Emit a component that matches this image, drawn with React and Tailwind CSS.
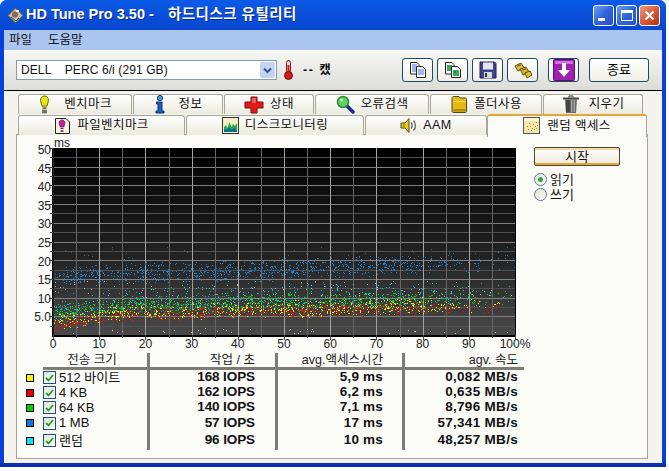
import React from 'react'

const font = "[font-family:'Liberation_Sans','Noto_Sans_CJK_KR',sans-serif]"

function rng(seed){
  let a = seed
  return () => {
    a |= 0; a = a + 0x6D2B79F5 | 0
    let t = Math.imul(a ^ a >>> 15, 1 | a)
    t = t + Math.imul(t ^ t >>> 7, 61 | t) ^ t
    return ((t ^ t >>> 14) >>> 0) / 4294967296
  }
}

// plot is 462 x 187, 0-100% and 0-50ms
const PW = 462
const PH = 187
const PMS = PH / 50

const series = [
  { color: '#1f7fd0', n: 1500, spread: 2.0, fade: 0.75, mid: x => 15.8 + 0.04 * x },
  { color: '#17c9c9', n: 700, spread: 2.6, fade: 0.95, mid: x => 7 + (x < 15 ? x * 0.12 : 1.8 + x * 0.02) },
  { color: '#1fc21f', n: 1100, spread: 1.9, fade: 0.95, mid: x => 5.6 + (x < 15 ? x * 0.13 : 1.95 + x * 0.025) },
  { color: '#efef1e', n: 1100, spread: 1.7, fade: 0.85, mid: x => 3.4 + (x < 12 ? x * 0.2 : 2.4 + x * 0.025) },
  { color: '#e01212', n: 1000, spread: 1.35, fade: 0.85, mid: x => 2.4 + (x < 12 ? x * 0.22 : 2.64 + x * 0.028) },
]

function makeDots(){
  const r = rng(4242)
  const dots = []
  series.forEach(s => {
    for (let i = 0; i < s.n; i++) {
      const x = r() * 100
      const keep = x < 72 ? 1 : Math.max(0.05, 1 - (x - 72) / 27)
      if (r() > keep * s.fade) continue
      const ms = s.mid(x) + (r() + r() - 1) * s.spread * 1.5
      dots.push({ x: Math.round(x / 100 * PW), y: Math.round(PH - ms * PMS), c: s.color, o: r() })
    }
  })
  dots.sort((a, b) => a.o - b.o)
  for (let i = 0; i < 150; i++) {
    const x = r() * 100
    dots.push({ x: Math.round(x / 100 * PW), y: Math.round(PH - (10.5 + r() * 4) * PMS), c: r() > 0.5 ? '#9fc9c0' : '#2aa0a0' })
  }
  for (let i = 0; i < 40; i++) {
    dots.push({ x: Math.round(r() * PW), y: Math.round(PH - (0.4 + r() * 1.4) * PMS), c: r() > 0.5 ? '#e8e870' : '#bbbbbb' })
  }
  for (let i = 0; i < 45; i++) {
    dots.push({ x: Math.round(r() * PW), y: Math.round(PH - (20 + r() * 4) * PMS), c: '#45617a' })
  }
  return dots
}

const dots = makeDots()

function Chart(){
  const left = 36
  const top = 13
  const yLabels = ['50','45','40','35','30','25','20','15','10','5.0']
  const xs = Array.from({ length: 21 }, (_, i) => i * PW / 20)
  const ys = Array.from({ length: 20 }, (_, i) => i * PH / 20)
  return (
    <svg width="514" height="218" className="block shrink-0" style={{ fontFamily: "'Liberation Sans', sans-serif" }}>
      <defs>
        <linearGradient id="plotbg" x1="0" y1="0" x2="0" y2="1">
          <stop offset="0" stopColor="#000" />
          <stop offset="0.6" stopColor="#242424" />
          <stop offset="1" stopColor="#4a4a4a" />
        </linearGradient>
      </defs>
      <text x={left + 1} y={top - 1} fontSize="12" fill="#222">ms</text>
      <g transform={`translate(${left} ${top})`} shapeRendering="crispEdges">
        <rect width={PW} height={PH} fill="url(#plotbg)" />
        {ys.map((y, i) => i > 0 && (
          <line key={i} x1="0" x2={PW} y1={Math.round(y) + 0.5} y2={Math.round(y) + 0.5} stroke={i % 2 ? '#4f4f4f' : '#7f7f7f'} />
        ))}
        {xs.map((x, i) => (
          <line key={i} y1="0" y2={PH} x1={Math.round(x) + 0.5} x2={Math.round(x) + 0.5} stroke={i % 2 ? '#666666' : '#a2a2a2'} />
        ))}
        {dots.map((d, i) => <rect key={i} x={d.x} y={d.y} width="1" height="1" fill={d.c} />)}
        <line x1="-0.5" x2="-0.5" y1="0" y2={PH + 1} stroke="#000" strokeWidth="1" />
        <line x1="0" x2="0" y1="0" y2={PH} stroke="#222" />
        <line x1="-1" x2={PW + 1} y1={PH + 0.5} y2={PH + 0.5} stroke="#000" strokeWidth="2" />
        <line x1={PW + 0.5} x2={PW + 0.5} y1="0" y2={PH} stroke="#000" strokeWidth="1" />
        {ys.map((y, i) => <line key={i} x1={i % 2 ? -3 : -4} x2="0" y1={Math.round(y) + 0.5} y2={Math.round(y) + 0.5} stroke="#444" />)}
        {xs.map((x, i) => <line key={i} y1={PH} y2={PH + (i % 2 ? 3 : 5)} x1={Math.round(x) + 0.5} x2={Math.round(x) + 0.5} stroke="#444" />)}
      </g>
      {yLabels.map((l, i) => (
        <text key={l} x={left - 2} y={top + 6 + i * 18.6} fontSize="12" fill="#222" textAnchor="end">{l}</text>
      ))}
      {Array.from({ length: 11 }, (_, i) => (
        <text key={i} x={left + i * PW / 10} y={top + PH + 13} fontSize="12" fill="#222" textAnchor="middle">{i === 10 ? '100%' : i * 10}</text>
      ))}
    </svg>
  )
}

function Bulb(){
  return <svg width="13" height="19" viewBox="0 0 13 19"><path d="M6.5 1C9 1 10.5 3 10.5 5.5L9 11H4L2.500 5.500C2.500 3 4 1 6.500 1Z" fill="#e6e619" stroke="#6b6b10" /><rect x="4.500" y="12" width="4" height="2" fill="#8a8a10" /><rect x="4.500" y="15" width="4" height="3" fill="#777" stroke="#444" strokeWidth=".5" /></svg>
}
function Info(){
  return <svg width="12" height="19" viewBox="0 0 12 19"><circle cx="6" cy="3" r="2.600" fill="#3aa0e0" stroke="#123a80" /><path d="M2.500 7H8V16H10V18H2V16H4V9H2.500Z" fill="#1d62c0" stroke="#0b2f70" /></svg>
}
function Cross(){
  return <svg width="20" height="18" viewBox="0 0 20 18"><path d="M7 1H13V6H19V12H13V17H7V12H1V6H7Z" fill="#e01818" stroke="#7a1010" /><path d="M8 2H12V7H8Z" fill="#f06060" /></svg>
}
function Glass(){
  return <svg width="19" height="19" viewBox="0 0 19 19"><path d="M10 10L17 17" stroke="#1a2a90" strokeWidth="3.500" strokeLinecap="round" /><circle cx="7" cy="7" r="5.500" fill="#5ed65e" stroke="#2a8a3a" strokeWidth="1.500" /><circle cx="5.500" cy="5" r="1.500" fill="#c8f4c8" /></svg>
}
function Folder(){
  return <svg width="18" height="19" viewBox="0 0 18 19"><path d="M2 4V3.500C2 2 3 1.500 4 1.500H9L10 3H15.500C16.500 3 16.500 4 16.500 5V16C16.500 17 16 17.500 15 17.500H3.500C2.500 17.500 2 17 2 16Z" fill="#e8b814" stroke="#4a4a20" /><path d="M3.500 6H15.500V7H3.500Z" fill="#f7e070" /><path d="M3.500 14H15.500V16.500H3.500Z" fill="#b58a10" /></svg>
}
function Trash(){
  return <svg width="18" height="19" viewBox="0 0 18 19"><rect x="1" y="2.500" width="16" height="2" fill="#444" /><path d="M7 2.500V1H11V2.500" fill="none" stroke="#333" /><path d="M3 4.500H15L14 18H4Z" fill="#666" /><path d="M5 5V17M7 5V17" stroke="#222" /><path d="M9 5H13V17H9Z" fill="#a8a8a8" /><path d="M11 5V17" stroke="#555" /></svg>
}
function FileBench(){
  return <svg width="17" height="18" viewBox="0 0 17 18"><path d="M1.500 1.500H12L15.500 5V16.500H1.500Z" fill="#f6f2e0" stroke="#222" /><path d="M8 3C10 3 11 4.500 11 6L9.800 10H6.200L5 6C5 4.500 6 3 8 3Z" fill="#c020a0" stroke="#701060" strokeWidth=".7" /><rect x="6.500" y="11" width="3" height="1" fill="#701060" /><rect x="6.500" y="13" width="3" height="2" fill="#666" /></svg>
}
function Monitor(){
  return <svg width="17" height="17" viewBox="0 0 17 17"><rect x=".5" y=".5" width="16" height="16" fill="#f5efc8" stroke="#333" /><path d="M2 15V10L4 8L5.500 11L7.500 5L9.500 10L11 7L13 9L15 6V15Z" fill="#25a84a" /><path d="M2 15V12L5 13L7 10L9 13L12 11L15 13V15Z" fill="#0e6e8e" /></svg>
}
function Speaker(){
  return <svg width="18" height="17" viewBox="0 0 18 17"><path d="M1 6L5 6L9 1.500V15.500L5 11H1Z" fill="#e6c820" stroke="#5a4a10" /><path d="M4 7V10" stroke="#7a6a20" /><path d="M11 5.500C12.500 7 12.500 10 11 11.500M13.500 3.500C16 6 16 11 13.500 13.500" fill="none" stroke="#555" strokeWidth="1.200" /></svg>
}
function RandomIcon(){
  const specks = [[5,12],[7,9],[9,11],[10,7],[12,9],[13,5],[11,12],[6,6],[8,13],[13,11],[4,9],[14,8]]
  return (
    <svg width="17" height="17" viewBox="0 0 17 17" shapeRendering="crispEdges">
      <rect x=".5" y=".5" width="16" height="16" fill="#f6e6a8" stroke="#555" />
      <rect x="1" y="1" width="15" height="3" fill="#fbf4d4" />
      {specks.map(([x, y], i) => <rect key={i} x={x} y={y} width="1" height="1" fill={i % 2 ? '#c08a30' : '#7a9a40'} />)}
    </svg>
  )
}

function DocsIcon({ fill, accent }){
  return (
    <svg width="18" height="18" viewBox="0 0 18 18">
      <path d="M1.500 1.500H8L10 3.500V13H1.500Z" fill="#fff" stroke="#223" />
      <path d="M3 4H8M3 6H8M3 8H8M3 10H8" stroke={accent} />
      <path d="M7.500 5.500H13.500L16.500 8.500V16.500H7.500Z" fill={fill} stroke="#223" />
      <path d="M9 9H15M9 11H15M9 13H15" stroke={accent} />
    </svg>
  )
}
function GreenDocs(){
  return (
    <svg width="18" height="18" viewBox="0 0 18 18">
      <path d="M1.500 1.500H8L10 3.500V13H1.500Z" fill="#fff" stroke="#223" />
      <rect x="3" y="4" width="5" height="6" fill="#34b04a" />
      <path d="M7.500 5.500H13.500L16.500 8.500V16.500H7.500Z" fill="#fff" stroke="#223" />
      <rect x="9" y="9" width="6" height="6" fill="#34b04a" />
      <rect x="10" y="10" width="2" height="2" fill="#2a60c0" />
    </svg>
  )
}
function Floppy(){
  return (
    <svg width="18" height="18" viewBox="0 0 18 18">
      <path d="M1 1H15.500L17 2.500V17H1Z" fill="#3c4590" stroke="#1c2050" />
      <rect x="4" y="1.500" width="10" height="7" fill="#e6e6f0" />
      <rect x="5" y="11" width="8" height="6" fill="#d8d8d8" />
      <rect x="6" y="12" width="2" height="4" fill="#333" />
    </svg>
  )
}
function Chain(){
  return (
    <svg width="20" height="18" viewBox="0 0 20 18" fill="none">
      <path d="M2 5L8 2L11 7L5 10Z" fill="#e0c030" stroke="#5a5010" />
      <path d="M7 8L13 6L16 11L10 14Z" fill="#d8b828" stroke="#5a5010" />
      <path d="M12 12L17 10L19 14L14 17Z" fill="#e0c030" stroke="#5a5010" />
      <path d="M4 5L8 4M9 9L13 8" stroke="#555" />
    </svg>
  )
}
function Download(){
  return (
    <svg width="22" height="22" viewBox="0 0 22 22">
      <rect x=".5" y=".5" width="21" height="21" rx="1" fill="#a020b0" stroke="#5a1070" />
      <rect x="2" y="2" width="18" height="3" fill="#d070e0" />
      <path d="M9 4H13V11H17L11 18L5 11H9Z" fill="#fff" />
    </svg>
  )
}
function Thermo(){
  return (
    <svg width="11" height="20" viewBox="0 0 11 20">
      <rect x="3.500" y=".5" width="4" height="13" rx="2" fill="#f2d8d8" stroke="#7a2020" />
      <rect x="4.500" y="5" width="2" height="9" fill="#d81818" />
      <circle cx="5.500" cy="15.500" r="4" fill="#d81818" stroke="#701010" />
    </svg>
  )
}
function AppIcon(){
  return (
    <svg width="17" height="17" viewBox="0 0 17 17">
      <path d="M8.500 1L16 8.500L8.500 16L1 8.500Z" fill="#c8bfae" stroke="#5a5040" />
      <circle cx="8" cy="7.500" r="3" fill="#8a6a48" />
      <path d="M4 10L9 14L12 11" fill="none" stroke="#444" />
      <rect x="9" y="3" width="3" height="2" fill="#f0f0e8" />
    </svg>
  )
}

function WinButton({ close, children }){
  return (
    <div className={`flex h-[21px] w-[21px] items-center justify-center rounded-[3px] border border-white ${close ? 'bg-gradient-to-br from-[#ec9a80] via-[#dc5a34] to-[#b8300c]' : 'bg-gradient-to-br from-[#6f9cf0] via-[#2f64dc] to-[#2a50c8]'}`}>
      {children}
    </div>
  )
}

function ToolButton({ children, className = 'w-[31px]' }){
  return (
    <button className={`flex h-[24px] ${className} items-center justify-center rounded-[3px] border border-[#1f4a66] bg-gradient-to-b from-white to-[#f0efe6] text-[13px]`}>
      {children}
    </button>
  )
}

function Tab({ w, icon, label, gap = 'gap-[13px]' }){
  return (
    <div style={{ width: w }} className={`flex h-[20px] shrink-0 items-center justify-center ${gap} rounded-t-[3px] border border-b-0 border-[#a9a79a] bg-gradient-to-b from-white to-[#ecebe0] text-[12.5px] tracking-[0.4px] text-[#111]`}>
      {icon}
      <span>{label}</span>
    </div>
  )
}

function Swatch({ color }){
  return <div className={`h-[8px] w-[8px] border border-black ${color}`} />
}

function Check({ label }){
  return (
    <div className="flex h-full items-center gap-[3px] pl-0 text-[13px] text-[#111]">
      <span className="flex h-[13px] w-[13px] shrink-0 items-center justify-center border border-[#1c5180] bg-gradient-to-br from-[#e4e4dc] to-white">
        <svg width="9" height="8" viewBox="0 0 9 8"><path d="M1 4L3.500 6.500L8 1" fill="none" stroke="#21a121" strokeWidth="1.800" /></svg>
      </span>
      <span>{label}</span>
    </div>
  )
}

const rows = [
  { label: '512 바이트', color: 'bg-[#f5f500]', iops: '168 IOPS', ms: '5,9 ms', speed: '0,082 MB/s', h: 'h-[15px]' },
  { label: '4 KB', color: 'bg-[#e80000]', iops: '162 IOPS', ms: '6,2 ms', speed: '0,635 MB/s', h: 'h-[15px]' },
  { label: '64 KB', color: 'bg-[#00d000]', iops: '140 IOPS', ms: '7,1 ms', speed: '8,796 MB/s', h: 'h-[15px]' },
  { label: '1 MB', color: 'bg-[#1078e0]', iops: '57 IOPS', ms: '17 ms', speed: '57,341 MB/s', h: 'h-[16px]' },
  { label: '랜덤', color: 'bg-[#10e0f0]', iops: '96 IOPS', ms: '10 ms', speed: '48,257 MB/s', h: 'h-[19px]' },
]

const colW = ['w-[107px]', 'w-[128px]', 'w-[127px]', 'w-[119px]']
const sep = 'border-r-[3px] border-[#7d7d75]'

function Value({ children, className }){
  return <div className={`flex h-full items-center justify-end ${className} text-[13.5px] font-bold text-[#111]`}>{children}</div>
}

function ResultTable(){
  return (
    <div className="flex">
      <div className="w-[17px] shrink-0 pt-[17px]">
        {rows.map(r => (
          <div key={r.label} className={`flex items-center ${r.h}`}><Swatch color={r.color} /></div>
        ))}
      </div>
      <div className="w-[481px]">
        <div className="flex h-[17px] border-b-[3px] border-[#7d7d75] text-[12.5px] text-[#222]">
          <div className={`${colW[0]} ${sep} flex items-center justify-center pr-[6px]`}>전송 크기</div>
          <div className={`${colW[1]} ${sep} flex items-center justify-end pr-[20px]`}>작업 / 초</div>
          <div className={`${colW[2]} ${sep} flex items-center justify-end pr-[19px]`}>avg.액세스시간</div>
          <div className={`${colW[3]} flex items-center justify-end pr-[6px]`}>agv. 속도</div>
        </div>
        {rows.map(r => (
          <div key={r.label} className={`flex ${r.h}`}>
            <div className={`${colW[0]} ${sep}`}><Check label={r.label} /></div>
            <div className={colW[1]}><Value className={`pr-[20px] ${sep} tracking-[-0.1px]`}>{r.iops}</Value></div>
            <div className={colW[2]}><Value className={`pr-[19px] ${sep} tracking-[0.2px]`}>{r.ms}</Value></div>
            <div className={colW[3]}><Value className="pr-[6px] tracking-[0.3px]">{r.speed}</Value></div>
          </div>
        ))}
      </div>
    </div>
  )
}

function Radio({ on, label }){
  return (
    <div className="flex h-[15px] items-center gap-[3px] text-[13px] text-[#111]">
      <span className="flex h-[13px] w-[13px] items-center justify-center rounded-full border border-[#5a7a96] bg-gradient-to-br from-[#e0e0d8] to-white">
        {on && <span className="h-[5px] w-[5px] rounded-full bg-[#3aa33a]" />}
      </span>
      <span>{label}</span>
    </div>
  )
}

export default function App(){
  return (
    <div className={`h-[471px] w-[669px] overflow-hidden bg-white ${font}`}>
      <div className="flex h-[467px] w-[666px] flex-col overflow-hidden rounded-t-[7px] bg-[#0a3fd8]">
        <div className="flex h-[30px] shrink-0 items-center bg-gradient-to-b from-[#0a5ae6] via-[#0a50da] to-[#0746cf] pr-[6px] pl-[7px]">
          <AppIcon />
          <div className="ml-[2px] text-[14.5px] font-bold whitespace-nowrap text-white [text-shadow:1px_1px_0_#0a2a90]">
            HD Tune Pro 3.50 - <span className="ml-[10px] tracking-[0.5px]">하드디스크 유틸리티</span>
          </div>
          <div className="ml-auto flex gap-[2px]">
            <WinButton><span className="mt-[9px] mr-[5px] h-[3px] w-[7px] bg-white" /></WinButton>
            <WinButton><span className="h-[11px] w-[12px] border border-t-[3px] border-white" /></WinButton>
            <WinButton close>
              <svg width="11" height="11" viewBox="0 0 11 11"><path d="M1.500 1.500L9.500 9.500M9.500 1.500L1.500 9.500" stroke="#fff" strokeWidth="2.200" /></svg>
            </WinButton>
          </div>
        </div>

        <div className="mx-[4px] flex min-h-0 flex-1 flex-col bg-[#f4f3ee]">
          <div className="flex h-[20px] shrink-0 items-center gap-[16px] bg-[#a9c5f0] pl-[5px] text-[12.5px] text-[#111]">
            <span>파일</span>
            <span>도움말</span>
          </div>

          <div className="flex h-[41px] shrink-0 items-center border-b border-black bg-gradient-to-b from-[#f7f7f4] to-[#dcdcd8] pl-[12px]">
            <div className="flex h-[20px] w-[261px] items-center border border-[#7f9db9] bg-white pl-[4px] text-[12px] whitespace-pre text-[#111]">
              <span className="flex-1 tracking-[0.1px]">DELL    PERC 6/i (291 GB)</span>
              <span className="mr-px flex h-[16px] w-[15px] items-center justify-center rounded-[2px] bg-[#c4d4f6]">
                <svg width="9" height="7" viewBox="0 0 9 7"><path d="M1 1.500L4.500 5L8 1.500" fill="none" stroke="#41557a" strokeWidth="2" /></svg>
              </span>
            </div>
            <div className="ml-[6px]"><Thermo /></div>
            <div className="ml-[9px] w-[35px] text-[12.5px] font-bold tracking-[1.5px] text-[#111]">-- 캤</div>
            <div className="ml-[64px] flex items-center gap-[4px]">
              <ToolButton><DocsIcon fill="#fff" accent="#3a70c8" /></ToolButton>
              <ToolButton><GreenDocs /></ToolButton>
              <ToolButton><Floppy /></ToolButton>
              <ToolButton><Chain /></ToolButton>
              <ToolButton className="ml-[6px] w-[31px]"><Download /></ToolButton>
              <ToolButton className="ml-[6px] w-[60px]">종료</ToolButton>
            </div>
          </div>

          <div className="flex min-h-0 flex-1 flex-col pt-[3px] pl-[12px]">
            <div className="flex gap-[1px] pl-[2px]">
              <Tab w={114} icon={<Bulb />} label="벤치마크" />
              <Tab w={90} icon={<Info />} label="정보" />
              <Tab w={90} icon={<Cross />} label="상태" gap="gap-[6px]" />
              <Tab w={114} icon={<Glass />} label="오류검색" gap="gap-[6px]" />
              <Tab w={112} icon={<Folder />} label="폴더사용" gap="gap-[6px]" />
              <Tab w={100} icon={<Trash />} label="지우기" gap="gap-[9px]" />
            </div>
            <div className="relative z-10 -mb-px flex h-[21px] items-end gap-[1px] pl-[2px]">
              <Tab w={167} icon={<FileBench />} label="파일벤치마크" gap="gap-[6px]" />
              <Tab w={178} icon={<Monitor />} label="디스크모니터링" gap="gap-[6px]" />
              <Tab w={122} icon={<Speaker />} label="AAM" gap="gap-[5px]" />
              <div className="-ml-px flex h-[23px] w-[160px] shrink-0 items-start justify-center gap-[7px] self-start rounded-t-[3px] border-x border-t-[2px] border-x-[#a9a79a] border-t-[#e8a33b] bg-[#fbfbf8] pt-[1px] text-[12.5px] tracking-[0.4px] text-[#111]">
                <RandomIcon />
                <span>랜덤 액세스</span>
              </div>
            </div>
            <div className="flex h-[325px] w-[632px] shrink-0 flex-col border border-[#a9a79a] bg-[#fbfbf8] pl-[9px]">
              <div className="-ml-[9px] flex">
                <Chart />
                <div className="ml-[3px] flex flex-col pt-[12px]">
                  <button className="flex h-[19px] w-[86px] items-center justify-center rounded-[2px] border border-[#4a4a3a] bg-gradient-to-b from-white to-[#f0ead8] text-[13px] text-[#111] shadow-[inset_0_-2px_0_#e8a33b,inset_0_2px_0_#f6d9a0]">시작</button>
                  <div className="mt-[6px] flex flex-col">
                    <Radio on label="읽기" />
                    <Radio label="쓰기" />
                  </div>
                </div>
              </div>
              <ResultTable />
            </div>
          </div>
        </div>
        <div className="h-[4px] shrink-0 bg-[#0a2fb0]" />
      </div>
    </div>
  )
}
